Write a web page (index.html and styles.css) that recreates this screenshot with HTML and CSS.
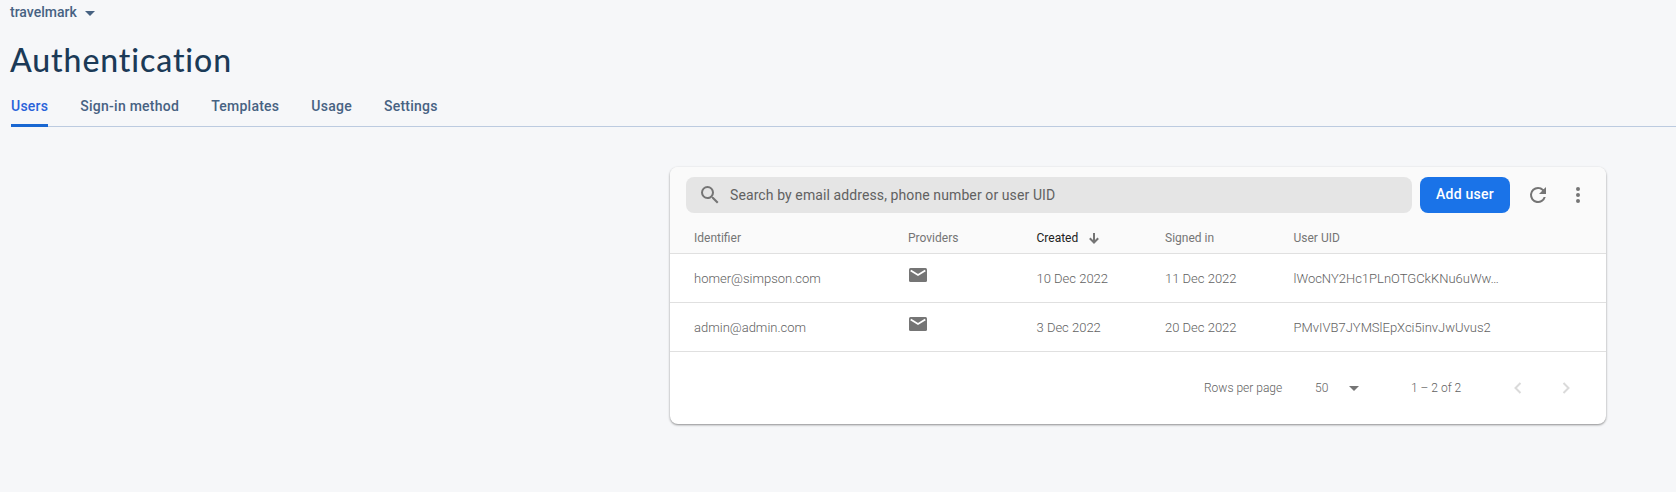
FILE: index.html
```html
<!DOCTYPE html>
<html lang="en">
<head>
<meta charset="utf-8">
<title>Authentication</title>
<link rel="stylesheet" href="styles.css">
</head>
<body>
<header class="page-header">
  <div class="project"><span>travelmark</span><svg class="caret" width="10" height="5" viewBox="0 0 10 5"><path d="M0 0h10L5 5z"/></svg></div>
  <h1 class="title">Authentication</h1>
  <nav class="tabs">
    <a class="tab active">Users</a>
    <a class="tab">Sign-in method</a>
    <a class="tab">Templates</a>
    <a class="tab">Usage</a>
    <a class="tab">Settings</a>
  </nav>
</header>
<main class="card">
  <div class="card-top">
    <div class="toolbar">
      <div class="search">
        <svg width="24" height="24" viewBox="0 0 24 24"><path d="M15.5 14h-.79l-.28-.27A6.47 6.47 0 0 0 16 9.5 6.5 6.5 0 1 0 9.5 16c1.61 0 3.09-.59 4.23-1.57l.27.28v.79l5 4.99L20.49 19l-4.99-5zm-6 0C7.01 14 5 11.99 5 9.5S7.01 5 9.5 5 14 7.01 14 9.5 11.99 14 9.5 14z"/></svg>
        <span>Search by email address, phone number or user UID</span>
      </div>
      <button class="add">Add user</button>
      <span class="icon-button"><svg width="24" height="24" viewBox="0 0 24 24"><path d="M17.65 6.35A7.96 7.96 0 0 0 12 4a8 8 0 1 0 7.73 10h-2.08A6 6 0 1 1 12 6c1.66 0 3.14.69 4.22 1.78L13 11h7V4l-2.35 2.35z"/></svg></span>
      <span class="icon-button"><svg width="24" height="24" viewBox="0 0 24 24"><path d="M12 8a2 2 0 1 0 0-4 2 2 0 0 0 0 4zm0 2a2 2 0 1 0 0 4 2 2 0 0 0 0-4zm0 6a2 2 0 1 0 0 4 2 2 0 0 0 0-4z"/></svg></span>
    </div>
    <div class="row head">
      <span>Identifier</span>
      <span>Providers</span>
      <span class="sorted">Created<svg width="10" height="11" viewBox="0 0 10 11"><path class="arrow" d="M5 0v10M.8 5.3L5 9.5l4.200-4.200"/></svg></span>
      <span>Signed in</span>
      <span>User UID</span>
    </div>
  </div>
  <div class="row">
    <span>homer@simpson.com</span>
    <span class="provider"><svg width="18" height="14" viewBox="0 0 18 14"><rect width="18" height="14" rx="1.500"/><path class="flap" d="M1.700 2.400L9 7l7.300-4.600"/></svg></span>
    <span>10 Dec 2022</span>
    <span>11 Dec 2022</span>
    <span class="uid">lWocNY2Hc1PLnOTGCkKNu6uWw…</span>
  </div>
  <div class="row">
    <span>admin@admin.com</span>
    <span class="provider"><svg width="18" height="14" viewBox="0 0 18 14"><rect width="18" height="14" rx="1.500"/><path class="flap" d="M1.700 2.400L9 7l7.300-4.600"/></svg></span>
    <span>3 Dec 2022</span>
    <span>20 Dec 2022</span>
    <span class="uid">PMvIVB7JYMSlEpXci5invJwUvus2</span>
  </div>
  <footer class="pager">
    <span class="rows-label">Rows per page</span>
    <span class="size">50<svg width="10" height="5" viewBox="0 0 10 5"><path d="M0 0h10L5 5z"/></svg></span>
    <span class="range">1 – 2 of 2</span>
    <svg class="chevron" width="8" height="12" viewBox="0 0 8 12"><path d="M6.500 1l-5 5 5 5"/></svg>
    <svg class="chevron" width="8" height="12" viewBox="0 0 8 12"><path d="M1.500 1l5 5-5 5"/></svg>
  </footer>
</main>
</body>
</html>
```
FILE: styles.css
```css
* { box-sizing: border-box; }
body {
  margin: 0;
  min-height: 492px;
  background: #f6f7f9;
  font-family: Roboto, "Liberation Sans", sans-serif;
  color: #757575;
  overflow: hidden;
}
svg { display: block; flex: none; fill: #757575; }
.page-header { padding-left: 10px; }
.project {
  display: flex;
  align-items: center;
  gap: 8px;
  height: 24px;
  font-size: 14px;
  font-weight: 500;
  color: #476282;
}
.caret { fill: #476282; margin-top: 2px; }
.title {
  margin: 16px 0 0;
  height: 40px;
  line-height: 40px;
  font-family: Lato, sans-serif;
  font-size: 32px;
  font-weight: 500;
  letter-spacing: 0.9px;
  color: #1b3a57;
}
.tabs {
  display: flex;
  gap: 32px;
  height: 47px;
  margin-left: 1px;
  border-bottom: 1px solid #bccbe0;
}
.tab {
  height: 47px;
  padding-top: 10px;
  line-height: 32px;
  font-size: 14px;
  font-weight: 500;
  letter-spacing: 0.25px;
  color: #476282;
}
.active {
  color: #2962d9;
  background: linear-gradient(#1967d2, #1967d2) bottom / 100% 3px no-repeat;
}
.card {
  width: 936px;
  height: 257px;
  margin: 40px 0 0 670px;
  border-radius: 8px;
  background: #fff;
  box-shadow: 0 1px 2px rgba(0, 0, 0, .3), 0 1px 3px rgba(0, 0, 0, .16);
  overflow: hidden;
}
.card-top { background: #fafafa; }
.toolbar {
  display: flex;
  align-items: center;
  height: 56px;
  padding: 0 8px 0 16px;
}
.search {
  display: flex;
  align-items: center;
  width: 726px;
  height: 36px;
  padding-left: 12px;
  gap: 8px;
  border-radius: 8px;
  background: #e5e5e5;
  font-size: 14px;
  letter-spacing: 0.1px;
  color: #616161;
}
.add {
  width: 90px;
  height: 36px;
  margin: 0 8px;
  padding: 0 0 2px;
  border: 0;
  border-radius: 8px;
  background: #1a73e8;
  color: #fff;
  font: 500 14px Roboto, sans-serif;
  letter-spacing: 0.25px;
}
.icon-button { display: grid; place-items: center; width: 40px; height: 40px; }
.row {
  display: grid;
  grid-template-columns: 214px 128.500px 128.500px 128.500px 1fr;
  align-items: center;
  height: 49px;
  padding: 0 24px;
  border-bottom: 1px solid #e0e0e0;
  font-size: 13px;
  font-weight: 300;
  color: #616161;
}
.head { height: 31px; font-size: 12px; font-weight: 400; color: #757575; }
.sorted { display: flex; align-items: center; gap: 11px; color: #212121; }
.arrow { fill: none; stroke: #757575; stroke-width: 2; }
.provider { padding: 0 0 7px 1px; }
.flap { fill: none; stroke: #fff; stroke-width: 1.800; }
.pager {
  display: flex;
  align-items: center;
  justify-content: flex-end;
  height: 72px;
  padding-right: 36px;
  font-size: 12px;
  font-weight: 300;
  color: #616161;
}
.rows-label { width: 111px; }
.size { display: flex; align-items: center; gap: 21px; width: 96px; }
.range { width: 103px; }
.chevron { fill: none; stroke: #dadada; stroke-width: 2; }
.chevron + .chevron { margin-left: 40px; }
```
